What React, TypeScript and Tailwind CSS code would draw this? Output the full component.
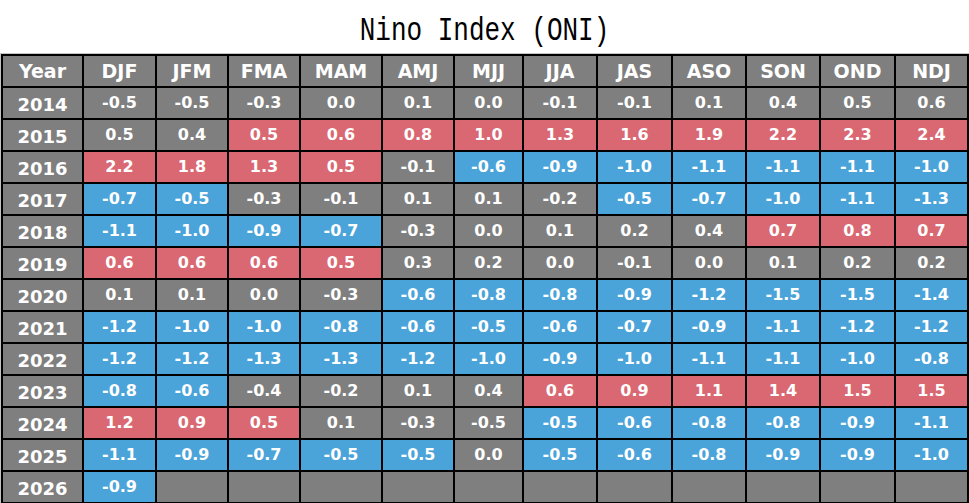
const months = ['DJF', 'JFM', 'FMA', 'MAM', 'AMJ', 'MJJ', 'JJA', 'JAS', 'ASO', 'SON', 'OND', 'NDJ'];

// value + colour flag: r = warm, b = cool, g = neutral
const rows: [string, string[]][] = [
  ['2014', ['-0.5g', '-0.5g', '-0.3g', '0.0g', '0.1g', '0.0g', '-0.1g', '-0.1g', '0.1g', '0.4g', '0.5g', '0.6g']],
  ['2015', ['0.5g', '0.4g', '0.5r', '0.6r', '0.8r', '1.0r', '1.3r', '1.6r', '1.9r', '2.2r', '2.3r', '2.4r']],
  ['2016', ['2.2r', '1.8r', '1.3r', '0.5r', '-0.1g', '-0.6b', '-0.9b', '-1.0b', '-1.1b', '-1.1b', '-1.1b', '-1.0b']],
  ['2017', ['-0.7b', '-0.5b', '-0.3g', '-0.1g', '0.1g', '0.1g', '-0.2g', '-0.5b', '-0.7b', '-1.0b', '-1.1b', '-1.3b']],
  ['2018', ['-1.1b', '-1.0b', '-0.9b', '-0.7b', '-0.3g', '0.0g', '0.1g', '0.2g', '0.4g', '0.7r', '0.8r', '0.7r']],
  ['2019', ['0.6r', '0.6r', '0.6r', '0.5r', '0.3g', '0.2g', '0.0g', '-0.1g', '0.0g', '0.1g', '0.2g', '0.2g']],
  ['2020', ['0.1g', '0.1g', '0.0g', '-0.3g', '-0.6b', '-0.8b', '-0.8b', '-0.9b', '-1.2b', '-1.5b', '-1.5b', '-1.4b']],
  ['2021', ['-1.2b', '-1.0b', '-1.0b', '-0.8b', '-0.6b', '-0.5b', '-0.6b', '-0.7b', '-0.9b', '-1.1b', '-1.2b', '-1.2b']],
  ['2022', ['-1.2b', '-1.2b', '-1.3b', '-1.3b', '-1.2b', '-1.0b', '-0.9b', '-1.0b', '-1.1b', '-1.1b', '-1.0b', '-0.8b']],
  ['2023', ['-0.8b', '-0.6b', '-0.4g', '-0.2g', '0.1g', '0.4g', '0.6r', '0.9r', '1.1r', '1.4r', '1.5r', '1.5r']],
  ['2024', ['1.2r', '0.9r', '0.5r', '0.1g', '-0.3g', '-0.5g', '-0.5b', '-0.6b', '-0.8b', '-0.8b', '-0.9b', '-1.1b']],
  ['2025', ['-1.1b', '-0.9b', '-0.7b', '-0.5b', '-0.5b', '0.0g', '-0.5b', '-0.6b', '-0.8b', '-0.9b', '-0.9b', '-1.0b']],
  ['2026', ['-0.9b', 'g', 'g', 'g', 'g', 'g', 'g', 'g', 'g', 'g', 'g', 'g']],
];

const bg: Record<string, string> = {
  r: 'bg-[#d96872]',
  b: 'bg-[#4aa3d9]',
  g: 'bg-[#7f7f7f]',
};

export default function App() {
  return (
    <div className="w-[969px] h-[503px] overflow-hidden bg-white font-['DejaVu_Sans',sans-serif]">
      {/* Title */}
      <div className="h-[53px] flex items-center justify-center pt-[8px]">
        <h1 className="inline-block scale-y-[1.3] font-['Liberation_Mono',monospace] text-[26px] leading-[30px] text-black">
          Nino Index (ONI)
        </h1>
      </div>

      {/* Table */}
      <div className="border-l border-t border-[#c4c4c4]">
        <div className="grid grid-cols-[79px_71px_70px_70px_80px_70px_67px_72px_73px_72px_72px_73px_71px] auto-rows-[30px] gap-[2px] p-[2px] bg-black">
          <div className="bg-[#7f7f7f] flex items-center justify-center text-[19px] font-bold text-white">Year</div>
          {months.map((m) => (
            <div key={m} className="bg-[#7f7f7f] flex items-center justify-center text-[19px] font-bold text-white">
              {m}
            </div>
          ))}
          {rows.map(([year, vals]) => (
            <div key={year} className="contents">
              <div className="bg-[#7f7f7f] flex items-center justify-center pt-[3px] text-[18px] font-bold text-white">
                {year}
              </div>
              {vals.map((v, i) => (
                <div
                  key={i}
                  className={`${bg[v.slice(-1)]} flex items-center justify-center text-[16px] font-bold text-white`}
                >
                  {v.slice(0, -1)}
                </div>
              ))}
            </div>
          ))}
        </div>
      </div>
    </div>
  );
}
